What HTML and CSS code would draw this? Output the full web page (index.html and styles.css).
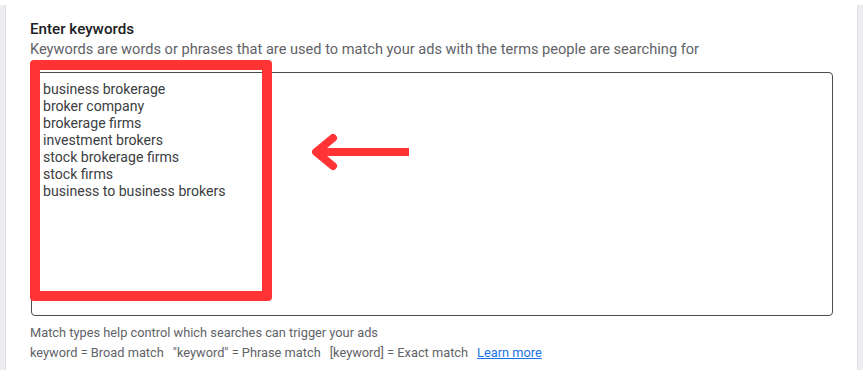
FILE: index.html
```html
<!DOCTYPE html>
<html>
<head>
<meta charset="utf-8">
<link rel="stylesheet" href="styles.css">
</head>
<body>
<div class="frame">
  <div class="rail rail-left"></div>
  <main class="panel">
    <h2 class="title">Enter keywords</h2>
    <p class="subtitle">Keywords are words or phrases that are used to match your ads with the terms people are searching for</p>
    <div class="field">
      <div class="keywords">
        <div>business brokerage</div>
        <div>broker company</div>
        <div>brokerage firms</div>
        <div>investment brokers</div>
        <div>stock brokerage firms</div>
        <div>stock firms</div>
        <div>business to business brokers</div>
      </div>
      <div class="highlight"></div>
      <svg class="arrow" width="104" height="40" viewBox="0 0 104 40">
        <path d="M6 20 H100" stroke="#ff3333" stroke-width="8" fill="none"/>
        <path d="M24 6 L7 20 L24 34" stroke="#ff3333" stroke-width="8" fill="none" stroke-linecap="round" stroke-linejoin="round"/>
      </svg>
    </div>
    <p class="hint first">Match types help control which searches can trigger your ads</p>
    <p class="hint types">
      <span>keyword = Broad match</span>
      <span>"keyword" = Phrase match</span>
      <span>[keyword] = Exact match</span>
      <a class="link" href="#">Learn more</a>
    </p>
  </main>
  <div class="rail rail-right"></div>
</div>
</body>
</html>
```
FILE: styles.css
```css
html, body {
  margin: 0;
  padding: 0;
  background: #ffffff;
  font-family: Roboto, "Liberation Sans", Arial, sans-serif;
}
.frame {
  display: flex;
  margin-top: 5px;
  height: 365px;
}
.rail {
  background: #ededf0;
}
.rail-left {
  width: 5px;
  border-right: 1px solid #dcdce0;
}
.rail-right {
  width: 5px;
  border-left: 1px solid #e2e2e6;
}
.panel {
  flex: 1;
  padding: 14px 19px 0 24px;
  background: #ffffff;
}
.title {
  margin: 0;
  font-size: 15.2px;
  line-height: 20px;
  font-weight: 500;
  color: #202124;
}
.subtitle {
  margin: 0;
  font-size: 14.6px;
  line-height: 20px;
  color: #5f6368;
}
.field {
  position: relative;
  margin-top: 13px;
  margin-left: 1px;
  width: 800px;
  height: 242px;
  border: 1px solid #4a4d52;
  border-radius: 4px;
}
.keywords {
  padding: 8px 11px;
  font-size: 14.1px;
  line-height: 17px;
  color: #3c4043;
}
.highlight {
  position: absolute;
  left: -2px;
  top: -13px;
  width: 222px;
  height: 221px;
  border: 10px solid #ff3333;
  border-radius: 4px;
}
.arrow {
  position: absolute;
  left: 277px;
  top: 59px;
}
.hint {
  margin: 0;
  font-size: 12.8px;
  line-height: 20px;
  color: #5f6368;
}
.first {
  margin-top: 7px;
}
.types {
  display: flex;
  gap: 9px;
}
.link {
  color: #1a73e8;
  text-decoration: underline;
}
```
